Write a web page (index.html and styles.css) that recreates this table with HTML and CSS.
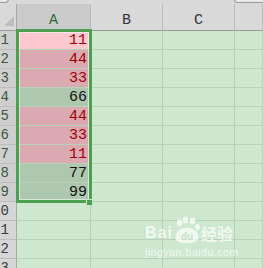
FILE: index.html
```html
<!DOCTYPE html>
<html>
<head>
<meta charset="utf-8">
<link rel="stylesheet" href="styles.css">
</head>
<body>
<div class="app">
  <div class="toolbar">
    <div class="tb tb1"></div>
    <div class="tb tb2"></div>
    <div class="tb tb3"></div>
  </div>
  <div class="grid">
    <div class="corner"><svg width="16" height="26" viewBox="0 0 16 26"><polygon points="4,22 14,22 14,12" fill="#bdbdbd"/></svg></div>
    <div class="ch ch-sel">A</div>
    <div class="ch">B</div>
    <div class="ch">C</div>
    <div class="ch"></div>

    <div class="rh rh-sel"><span>1</span></div><div class="c c-hi-active">11</div><div class="c"></div><div class="c"></div><div class="c"></div>
    <div class="rh rh-sel"><span>2</span></div><div class="c c-hi">44</div><div class="c"></div><div class="c"></div><div class="c"></div>
    <div class="rh rh-sel"><span>3</span></div><div class="c c-hi">33</div><div class="c"></div><div class="c"></div><div class="c"></div>
    <div class="rh rh-sel"><span>4</span></div><div class="c c-sel">66</div><div class="c"></div><div class="c"></div><div class="c"></div>
    <div class="rh rh-sel"><span>5</span></div><div class="c c-hi">44</div><div class="c"></div><div class="c"></div><div class="c"></div>
    <div class="rh rh-sel"><span>6</span></div><div class="c c-hi">33</div><div class="c"></div><div class="c"></div><div class="c"></div>
    <div class="rh rh-sel"><span>7</span></div><div class="c c-hi">11</div><div class="c"></div><div class="c"></div><div class="c"></div>
    <div class="rh rh-sel"><span>8</span></div><div class="c c-sel">77</div><div class="c"></div><div class="c"></div><div class="c"></div>
    <div class="rh rh-sel"><span>9</span></div><div class="c c-sel">99</div><div class="c"></div><div class="c"></div><div class="c"></div>
    <div class="rh"><span>10</span></div><div class="c"></div><div class="c"></div><div class="c"></div><div class="c"></div>
    <div class="rh"><span>11</span></div><div class="c"></div><div class="c"></div><div class="c"></div><div class="c"></div>
    <div class="rh"><span>12</span></div><div class="c"></div><div class="c"></div><div class="c"></div><div class="c"></div>
    <div class="rh"><span>13</span></div><div class="c"></div><div class="c"></div><div class="c"></div><div class="c"></div>
  </div>

  <div class="selection"></div>
  <div class="handle"></div>

  <div class="watermark">
    <div class="wm-logo">
      <span class="wm-bai">Bai</span>
      <span class="wm-paw">
        <svg width="28" height="27" viewBox="0 0 28 27">
          <ellipse cx="6.5" cy="7" rx="2.8" ry="3.4" fill="#fff"/>
          <ellipse cx="12.5" cy="3.8" rx="2.8" ry="3.4" fill="#fff"/>
          <ellipse cx="19.5" cy="5" rx="2.8" ry="3.4" fill="#fff"/>
          <ellipse cx="24.5" cy="11" rx="2.5" ry="3" fill="#fff"/>
          <path d="M2.5 21.5 C2.5 14.5 9 11.5 14 11.5 C20 11.5 25.5 15.5 25.5 21 C25.5 25.5 21 27 14 27 C7 27 2.5 25.5 2.5 21.5 Z" fill="#fff"/>
          <text x="14" y="24" text-anchor="middle" font-family="Liberation Sans, sans-serif" font-size="10" font-weight="bold" fill="#c6e2c6">du</text>
        </svg>
      </span>
      <span class="wm-cn">经验</span>
    </div>
    <div class="wm-url">jingyan.baidu.com</div>
  </div>
</div>
</body>
</html>
```
FILE: styles.css
```css
* { box-sizing: border-box; }
html, body { margin: 0; padding: 0; }
body { width: 263px; height: 268px; overflow: hidden; background: #cde8cf; }

.app {
  position: relative;
  width: 263px;
  height: 268px;
  overflow: hidden;
  font-family: "Liberation Mono", "DejaVu Sans Mono", monospace;
}

.toolbar {
  height: 4px;
  background: #d9d9d9;
  display: flex;
  overflow: hidden;
}
.tb {
  height: 4px;
  border: 1px solid #9a9a9a;
  border-top: none;
  border-radius: 0 0 4px 4px;
  background: #e9e9e9;
  margin-top: -1px;
}
.tb1 { width: 12px; margin-left: -3px; }
.tb2 { width: 125px; margin-left: 4px; visibility: hidden; }
.tb3 { flex: 1; margin-left: 96px; margin-right: -4px; }

.grid {
  display: grid;
  grid-template-columns: 17px 74px 72px 72px 1fr;
  grid-template-rows: 27px repeat(13, 19px);
}

.corner {
  background: #d9d9d9;
  border-right: 1px solid #a8a8a8;
  border-bottom: 1px solid #9c9c9c;
}
.corner svg { display: block; }

.ch {
  background: #d9d9d9;
  border-right: 1px solid #bcbcbc;
  border-bottom: 1px solid #9c9c9c;
  color: #333;
  font-size: 15px;
  display: flex;
  align-items: flex-end;
  justify-content: center;
  padding-bottom: 2px;
  line-height: 15px;
}
.ch-sel { background: #cbcbcb; color: #2e6b35; }

.rh {
  background: #d6d6d6;
  border-right: 1px solid #a8a8a8;
  border-bottom: 1px solid #bdbdbd;
  overflow: hidden;
  color: #3c3c3c;
  font-size: 14px;
  line-height: 18px;
}
.rh span {
  display: block;
  width: 40px;
  margin-left: -31px;
  text-align: right;
}
.rh-sel { background: #cfcfcf; color: #35593a; }

.c {
  border-right: 1px solid #b7d2b9;
  border-bottom: 1px solid #b7d2b9;
  font-size: 15px;
  line-height: 19px;
  text-align: right;
  padding-right: 3px;
  color: #111;
}
.c-hi-active { background: #ffc7ce; color: #9c0006; }
.c-hi { background: #dba9b1; color: #9c0006; }
.c-sel { background: #adc8ae; color: #111; }

.selection {
  position: absolute;
  left: 16px;
  top: 29px;
  width: 76px;
  height: 174px;
  border: 3px solid #4f9f52;
  box-shadow: inset 0 0 0 1px rgba(255,255,255,0.55);
}
.handle {
  position: absolute;
  left: 86px;
  top: 199px;
  width: 7px;
  height: 7px;
  background: #4f9f52;
  border: 1px solid rgba(255,255,255,0.7);
}

.watermark {
  position: absolute;
  left: 145px;
  top: 215px;
  width: 92px;
  color: #fff;
  opacity: 0.7;
}
.wm-logo {
  display: flex;
  align-items: flex-end;
  height: 28px;
}
.wm-bai {
  font-family: "Liberation Sans", Arial, sans-serif;
  font-weight: bold;
  font-size: 16px;
  line-height: 16px;
  letter-spacing: 1px;
  margin-bottom: 2px;
}
.wm-paw svg { display: block; }
.wm-cn {
  font-family: "Noto Sans CJK SC", sans-serif;
  font-weight: bold;
  font-size: 16px;
  line-height: 18px;
  margin-bottom: 1px;
}
.wm-url {
  font-family: "Liberation Sans", Arial, sans-serif;
  font-size: 11px;
  line-height: 12px;
  margin-top: 3px;
  letter-spacing: 0.3px;
}
```
